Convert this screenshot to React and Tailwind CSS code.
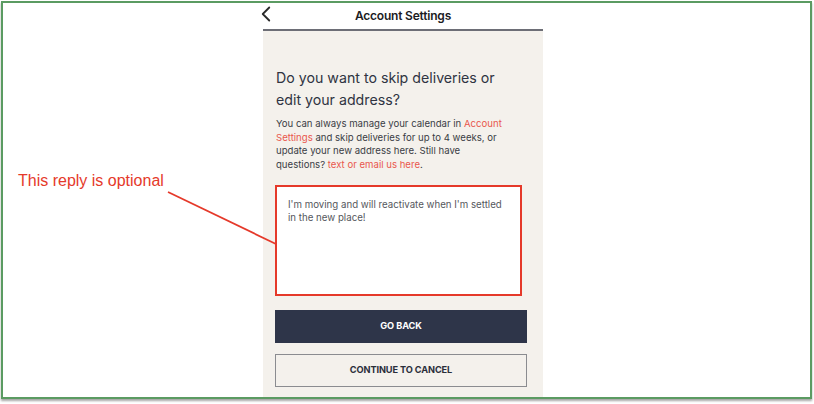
import { ChevronLeft } from 'lucide-react';

export default function App() {
  return (
    <div className="relative w-[814px] h-[404px] bg-white" style={{ fontFamily: 'Inter, "Liberation Sans", sans-serif' }}>
      {/* Frame */}
      <div className="ml-[1px] mt-[1px] w-[811px] h-[398px] border-2 border-[#5b9b62] shadow-[0_2px_2px_rgba(0,0,0,0.35)]">
        <div className="ml-[260px] w-[280px] h-full flex flex-col bg-[#f4f1ec]">
          {/* Header */}
          <div className="relative h-[28px] shrink-0 bg-white border-b-2 border-[#6d6e76] flex items-center justify-center">
            <ChevronLeft size={26} strokeWidth={1.7} className="absolute left-[-10px] top-[-2px] text-[#2a2a2a]" />
            <span className="text-[12px] font-semibold text-[#1b1b1f] tracking-[-0.2px]">Account Settings</span>
          </div>

          {/* Body */}
          <div className="px-[12px] pt-[36px] flex flex-col">
            <h1 className="text-[14.2px] leading-[22px] text-[#2f3442] pl-[1px]">
              Do you want to skip deliveries or
              <br />
              edit your address?
            </h1>
            <p className="mt-[6px] w-[232px] text-[9.6px] leading-[13.7px] text-[#3a3d45] pl-[1px]">
              You can always manage your calendar in <span className="text-[#e9574d]">Account Settings</span> and skip deliveries for up to 4 weeks, or update your new address here. Still have questions? <span className="text-[#e9574d]">text or email us here</span>.
            </p>

            <div className="mt-[13px] w-[247px] h-[111px] bg-white border-2 border-[#e5392a] px-[11px] pt-[11px]">
              <p className="text-[9.7px] leading-[13.5px] text-[#55575d]">
                I'm moving and will reactivate when I'm settled in the new place!
              </p>
            </div>

            <button className="mt-[14px] w-[252px] h-[33px] bg-[#2e3549] text-white text-[9.2px] font-bold tracking-[-0.1px]">
              GO BACK
            </button>
            <button className="mt-[11px] w-[252px] h-[33px] border-[1.5px] border-[#8b8c90] text-[#2a2e3a] text-[9.2px] font-bold tracking-[-0.1px]">
              CONTINUE TO CANCEL
            </button>
          </div>
        </div>
      </div>

      {/* Annotation */}
      <div className="absolute left-[18px] top-[170px] text-[16px] leading-[20px] text-[#e5392a]" style={{ fontFamily: '"Liberation Sans", Arial, sans-serif' }}>
        This reply is optional
      </div>
      <svg className="absolute left-0 top-0 pointer-events-none" width="814" height="404">
        <line x1="168" y1="191" x2="276" y2="243" stroke="#e5392a" strokeWidth="1.8" />
      </svg>
    </div>
  );
}
